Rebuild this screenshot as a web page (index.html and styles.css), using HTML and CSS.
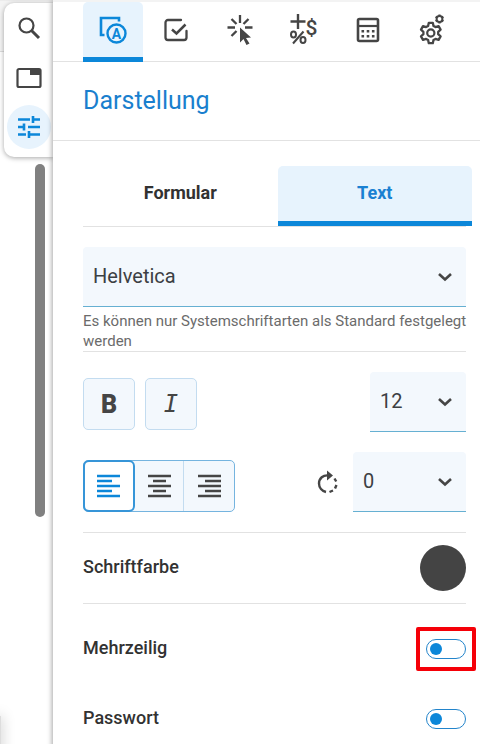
FILE: index.html
```html
<!DOCTYPE html>
<html lang="de">
<head>
    <meta charset="UTF-8">
    <title>Darstellung</title>
    <meta name="viewport" content="width=device-width, initial-scale=1.0">
    <link rel="stylesheet" href="styles.css">
</head>
<body>
    <aside class="workspace">
        <nav class="rail">
            <button class="rail-btn" type="button" aria-label="Suche">
                <svg width="24" height="24" viewBox="0 0 24 24" fill="none" stroke="currentColor" stroke-width="2.2">
                    <circle cx="9.5" cy="8.5" r="7"/>
                    <path d="M14.5 13.5l7.5 7.5" stroke-width="3"/>
                </svg>
            </button>
            <button class="rail-btn" type="button" aria-label="Seiten">
                <svg width="26" height="22" viewBox="0 0 26 22">
                    <rect x="1.5" y="2" width="23" height="18" rx="1.5" fill="none" stroke="currentColor" stroke-width="2.2"/>
                    <path d="M14 2h10v6H14z" fill="currentColor"/>
                </svg>
            </button>
            <button class="rail-btn active" type="button" aria-label="Eigenschaften">
                <svg width="24" height="24" viewBox="0 0 24 24" fill="none" stroke="currentColor" stroke-width="2.6">
                    <path d="M1 4.5h12M16 4.5h7M16 1v7M1 12h6M11 12h12M7 8.5v7M1 19.5h8M12 19.5h11M12 16v7"/>
                </svg>
            </button>
        </nav>
        <div class="scroll-thumb"></div>
        <div class="page-edge"></div>
    </aside>

    <main class="panel">
        <nav class="icon-tabs">
            <button class="icon-tab active" type="button" aria-label="Darstellung">
                <svg width="28" height="28" viewBox="0 0 28 28" fill="none" stroke="currentColor">
                    <path d="M5.5 19H2V2h18v3.5" stroke-width="2.6"/>
                    <circle cx="17.5" cy="17.5" r="9" stroke-width="2.4"/>
                    <text class="glyph" x="17.5" y="22.5" font-size="14">A</text>
                </svg>
            </button>
            <button class="icon-tab" type="button" aria-label="Validierung">
                <svg width="24" height="24" viewBox="0 0 24 24" fill="none" stroke="currentColor" stroke-width="2.3">
                    <path d="M17 2H4a2.500 2.500 0 0 0-2.500 2.500v15A2.500 2.500 0 0 0 4 22h16a2.500 2.500 0 0 0 2.500-2.500V13" stroke-linecap="round"/>
                    <path d="M8 11.5l4.500 4L21.500 6.500" stroke-width="2.5"/>
                </svg>
            </button>
            <button class="icon-tab" type="button" aria-label="Aktionen">
                <svg width="26" height="30" viewBox="0 0 26 30">
                    <path d="M13 0v8M4.500 4l5 5M21.500 4l-5 5M.500 12.500H8M18 12.500h7.500M4.500 21l5-5" fill="none" stroke="currentColor" stroke-width="2.3"/>
                    <path d="M13 12.500l11 10-5 .500 3.500 5.500-3 1.500-3-6-3.500 3.500z" fill="currentColor"/>
                </svg>
            </button>
            <button class="icon-tab" type="button" aria-label="Format">
                <svg width="30" height="32" viewBox="0 0 30 32">
                    <path d="M9 0v15M1.500 7.500h15" fill="none" stroke="currentColor" stroke-width="2.4"/>
                    <g fill="none" stroke="currentColor" stroke-width="2">
                        <ellipse cx="4.500" cy="20.500" rx="2.500" ry="3"/>
                        <ellipse cx="14" cy="26" rx="2.500" ry="3"/>
                        <path d="M14.500 17.500L4 29.500"/>
                    </g>
                    <text class="glyph medium" x="22.500" y="21" font-size="21">$</text>
                </svg>
            </button>
            <button class="icon-tab" type="button" aria-label="Berechnen">
                <svg width="24" height="28" viewBox="0 0 24 28">
                    <rect x="2" y="3" width="20" height="22" rx="1.5" fill="none" stroke="currentColor" stroke-width="2.6"/>
                    <path d="M2 10h20" stroke="currentColor" stroke-width="2.2"/>
                    <path d="M5.500 15.200h2.600M10.700 15.200h2.600M15.900 15.200h2.600M5.500 20.200h2.600M10.700 20.200h2.600M15.900 20.200h2.600" stroke="currentColor" stroke-width="2.6"/>
                </svg>
            </button>
            <button class="icon-tab" type="button" aria-label="Optionen">
                <svg width="26" height="32" viewBox="0 0 26 32" fill="none" stroke="currentColor" stroke-linejoin="round">
                    <path d="M9.800 8.800h4l.700 3.200 2 1.100 3.100-1 2 3.500-2.400 2.200v2.400l2.400 2.200-2 3.500-3.100-1-2 1.100-.700 3.200h-4L9.100 26l-2-1.100-3.100 1-2-3.500 2.400-2.200v-2.400L2 15.600l2-3.500 3.100 1 2-1.100z" stroke-width="2.3"/>
                    <circle cx="11.800" cy="19" r="3.600" stroke-width="2.2"/>
                    <circle cx="20.500" cy="5" r="2.900" stroke-width="2"/>
                    <path d="M20.500.500v1.600M20.500 7.900v1.600M24.400 2.700l-1.400.800M18 6.500l-1.400.800M16.600 2.700l1.400.800M23 6.500l1.400.800" stroke-width="2.2"/>
                </svg>
            </button>
        </nav>

        <h1 class="panel-title">Darstellung</h1>

        <div class="panel-body">
            <div class="tabs">
                <button class="tab" type="button">Formular</button>
                <button class="tab active" type="button">Text</button>
            </div>

            <div class="field">
                <div class="select">
                    <select id="font" aria-label="Schriftart">
                        <option>Helvetica</option>
                    </select>
                    <svg width="14" height="10" viewBox="0 0 14 10"><path d="M1 1l6 5.500L13 1" fill="none" stroke="currentColor" stroke-width="2.6"/></svg>
                </div>
                <p class="hint">Es können nur Systemschriftarten als Standard festgelegt werden</p>
            </div>

            <div class="row style-row">
                <div class="buttons">
                    <button class="style-btn bold" type="button" aria-label="Fett">B</button>
                    <button class="style-btn italic" type="button" aria-label="Kursiv">I</button>
                </div>
                <div class="select size">
                    <select id="size" aria-label="Schriftgröße">
                        <option>12</option>
                    </select>
                    <svg width="14" height="10" viewBox="0 0 14 10"><path d="M1 1l6 5.500L13 1" fill="none" stroke="currentColor" stroke-width="2.6"/></svg>
                </div>
            </div>

            <div class="row align-row">
                <div class="align-group">
                    <button class="align-btn active" type="button" aria-label="Linksbündig">
                        <svg width="24" height="24" viewBox="0 0 24 24"><path d="M0 2h23M0 7h15M0 12h23M0 17h15M0 22h23" stroke="currentColor" stroke-width="2.4"/></svg>
                    </button>
                    <button class="align-btn" type="button" aria-label="Zentriert">
                        <svg width="24" height="24" viewBox="0 0 24 24"><path d="M1 2h23M6 7h13M1 12h23M6 17h13M1 22h23" stroke="currentColor" stroke-width="2.4"/></svg>
                    </button>
                    <button class="align-btn" type="button" aria-label="Rechtsbündig">
                        <svg width="24" height="24" viewBox="0 0 24 24"><path d="M1 2h23M8 7h16M1 12h23M8 17h16M1 22h23" stroke="currentColor" stroke-width="2.4"/></svg>
                    </button>
                </div>
                <div class="rotation">
                    <svg width="24" height="26" viewBox="0 0 24 26">
                        <path d="M13 6.500C7 5.500 3 9.500 3 14.500c0 4 3 7.500 7 8.500" fill="none" stroke="currentColor" stroke-width="2.4"/>
                        <path d="M11 1.500l6 5-6 5z" fill="currentColor"/>
                        <path d="M18.500 9.500l1.700 3M20.500 16l-1.500 3.500M17 21.500l-3.500 1.500" fill="none" stroke="currentColor" stroke-width="2.4"/>
                    </svg>
                    <div class="select angle">
                        <select id="angle" aria-label="Drehung">
                            <option>0</option>
                        </select>
                        <svg width="14" height="10" viewBox="0 0 14 10"><path d="M1 1l6 5.500L13 1" fill="none" stroke="currentColor" stroke-width="2.6"/></svg>
                    </div>
                </div>
            </div>

            <div class="row color-row">
                <label for="color">Schriftfarbe</label>
                <button class="swatch" id="color" type="button"></button>
            </div>

            <div class="row toggle-row">
                <label for="multiline">Mehrzeilig</label>
                <span class="toggle marked"><input type="checkbox" id="multiline"></span>
            </div>
            <div class="row toggle-row">
                <label for="password">Passwort</label>
                <span class="toggle"><input type="checkbox" id="password"></span>
            </div>
        </div>
    </main>
</body>
</html>
```
FILE: styles.css
```css
* {
    box-sizing: border-box;
}
body {
    margin: 0;
    font-family: Roboto, "Liberation Sans", sans-serif;
    color: #323232;
    background: #fff;
    display: flex;
    min-height: 100vh;
    overflow: hidden;
}
button {
    font-family: inherit;
    color: #454545;
    background: none;
    border: none;
    padding: 0;
    display: flex;
    align-items: center;
    justify-content: center;
    cursor: pointer;
}
svg {
    flex: none;
    display: block;
}

/* Left strip */
.workspace {
    position: relative;
    width: 53px;
    flex: none;
    padding-top: 2px;
    border-top: 1px solid #ececec;
    background: linear-gradient(#f4f4f4 50px, #ddd 50px, #ddd 51px, #fff 51px);
}
.rail {
    margin-left: 4px;
    height: 154px;
    padding-top: 4px;
    background: #fff;
    border-radius: 10px 0 0 10px;
    box-shadow: 0 1px 5px rgba(0, 0, 0, 0.35);
    display: flex;
    flex-direction: column;
    align-items: center;
    gap: 5px;
}
.rail-btn {
    width: 44px;
    height: 44px;
    border-radius: 50%;
}
.rail-btn.active {
    color: #0c87d9;
    background: #e7f3fd;
}
.scroll-thumb {
    width: 10px;
    height: 353px;
    margin: 7px 8px 0 auto;
    border-radius: 5px;
    background: #808080;
}
.page-edge {
    position: absolute;
    left: -6px;
    bottom: -10px;
    width: 7px;
    height: 48px;
    background: #ddd;
    box-shadow: 0 0 14px rgba(0, 0, 0, 0.25);
}

/* Panel */
.panel {
    position: relative;
    flex: 1;
    min-width: 0;
    background: #fff;
    border-top: 2px solid #f3f3f3;
    box-shadow: -1px 0 5px rgba(0, 0, 0, 0.35);
}
.icon-tabs {
    display: flex;
    gap: 4px;
    height: 60px;
    padding-left: 30px;
    border-bottom: 1px solid #e2e2e2;
}
.icon-tab {
    width: 60px;
    height: 60px;
    border-bottom: 5px solid transparent;
}
.icon-tab.active {
    margin-right: -1px;
    color: #0c87d9;
    background: #e7f3fd;
    border-bottom-color: #0c87d9;
    border-radius: 5px 5px 0 0;
}
.glyph {
    font-family: Roboto, sans-serif;
    font-weight: 700;
    text-anchor: middle;
    fill: currentColor;
    stroke: none;
}
.glyph.medium {
    font-weight: 500;
}
.panel-title {
    margin: 0;
    padding-left: 30px;
    font-size: 25px;
    font-weight: 400;
    line-height: 78px;
    color: #1a7fce;
    border-bottom: 1px solid #e2e2e2;
}
.panel-body {
    padding: 25px 14px 0 30px;
}
.tabs {
    display: flex;
    height: 61px;
    margin-right: -6px;
    position: relative;
}
.tabs::after {
    content: "";
    position: absolute;
    left: 0;
    right: 6px;
    bottom: 0;
    border-bottom: 1px solid #e2e2e2;
}
.tab {
    flex: 1;
    height: 60px;
    padding-bottom: 2px;
    font-size: 18px;
    font-weight: 700;
    color: #323232;
    border-bottom: 5px solid transparent;
}
.tab.active {
    color: #1a80d2;
    background: #e7f3fd;
    border-bottom-color: #0c87d9;
    border-radius: 5px 5px 0 0;
}
.field {
    margin-top: 20px;
    border-bottom: 1px solid #e2e2e2;
}
.select {
    position: relative;
    color: #454545;
}
.select select {
    appearance: none;
    width: 100%;
    height: 60px;
    padding: 0 40px 2px 10px;
    font-family: inherit;
    font-size: 20px;
    color: #3c4043;
    background: #f3f8fd;
    border: none;
    border-bottom: 1px solid #66b0d2;
    border-radius: 4px 4px 0 0;
}
.select svg {
    position: absolute;
    right: 14px;
    top: 26px;
    pointer-events: none;
}
.hint {
    margin: 0 -6px 0 0;
    padding-top: 4px;
    font-size: 15px;
    line-height: 20px;
    color: #6b6b6b;
}

.row {
    display: flex;
    align-items: center;
    justify-content: space-between;
}
.style-row {
    margin-top: 20px;
}
.buttons {
    display: flex;
    gap: 10px;
    padding-top: 4px;
}
.style-btn {
    width: 52px;
    height: 52px;
    border: 1px solid #c3dcf0;
    border-radius: 5px;
    background: #f3f8fd;
    font-size: 25px;
}
.bold {
    font-weight: 900;
}
.italic {
    font-family: "DejaVu Sans Mono", monospace;
    font-style: italic;
    font-size: 24px;
}
.size {
    width: 96px;
}
.angle {
    width: 113px;
}
.align-row {
    align-items: flex-end;
    padding: 20px 0;
    border-bottom: 1px solid #e2e2e2;
}
.align-group {
    display: flex;
    height: 52px;
    border: 1px solid #75b4df;
    border-radius: 5px;
    background: #f3f8fd;
}
.align-btn {
    width: 50px;
    height: 50px;
}
.align-btn + .align-btn {
    border-right: 1px solid #c3dcf0;
}
.align-btn:last-child {
    border-right: none;
}
.align-btn.active {
    color: #0c87d9;
    background: #fff;
    border-radius: 5px;
    outline: 2px solid #3695d8;
    outline-offset: -1px;
}
.rotation {
    display: flex;
    align-items: center;
    gap: 13px;
    color: #454545;
}
label {
    padding-bottom: 3px;
    font-size: 18px;
    font-weight: 500;
}
.color-row {
    height: 71px;
    border-bottom: 1px solid #e2e2e2;
}
.swatch {
    width: 46px;
    height: 46px;
    border-radius: 50%;
    background: #444;
}
.color-row + .toggle-row {
    margin-top: 10px;
}
.toggle-row {
    height: 70px;
}
.toggle {
    position: relative;
    display: flex;
}
.toggle input {
    appearance: none;
    width: 40px;
    height: 20px;
    margin: 0;
    padding: 3px;
    border: 1px solid #2284cb;
    border-radius: 10px;
    display: flex;
    background: #fff;
}
.toggle input::before {
    content: "";
    width: 12px;
    height: 12px;
    border-radius: 50%;
    background: #0c87d9;
}
.toggle input:checked {
    justify-content: flex-end;
}
.marked::after {
    content: "";
    position: absolute;
    inset: -12px -10px;
    border: 4px solid #f50008;
    border-radius: 2px;
    pointer-events: none;
}
```
